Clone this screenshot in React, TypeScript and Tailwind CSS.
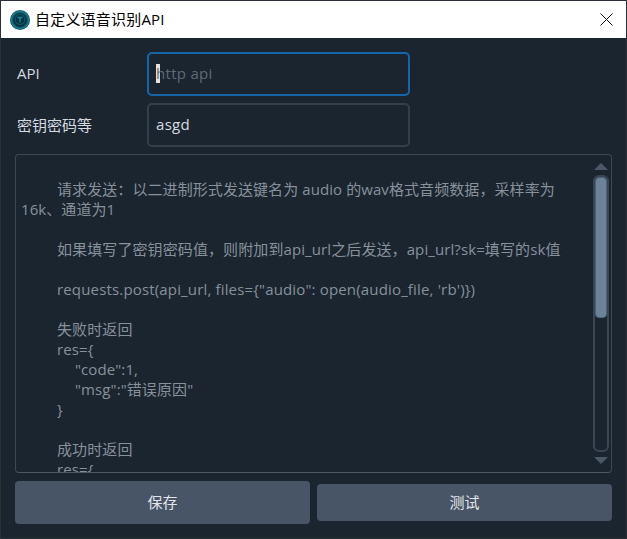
import React from "react";

function Line({ children, indent = "pl-[36px]" }: { children?: React.ReactNode; indent?: string }) {
  return <div className={`h-5 whitespace-pre tracking-[0.1px] ${indent}`}>{children}</div>;
}

export default function App() {
  return (
    <div
      className="w-[627px] h-[539px] overflow-hidden bg-[#1a2530] border border-[#2b3038] flex flex-col"
      style={{ fontFamily: '"Open Sans", "Noto Sans CJK SC", sans-serif' }}
    >
      <div className="h-[37px] shrink-0 bg-white flex items-center pl-[9px] pr-[9px]">
        <svg width="20" height="20" viewBox="0 0 20 20" className="shrink-0">
          <defs>
            <radialGradient id="g" cx="50%" cy="50%" r="50%">
              <stop offset="0%" stopColor="#0c3a48" />
              <stop offset="60%" stopColor="#0a2a36" />
              <stop offset="85%" stopColor="#148090" />
              <stop offset="100%" stopColor="#0d4a58" />
            </radialGradient>
          </defs>
          <circle cx="10" cy="10" r="10" fill="url(#g)" />
          <circle cx="10" cy="9.5" r="5" fill="none" stroke="#0b5c6e" strokeWidth="1.2" />
          <path d="M7.5 7.5h5M10 7.5v5" stroke="#168aa0" strokeWidth="1.3" fill="none" />
        </svg>
        <span className="ml-[5px] text-[15px] tracking-[0.2px] text-black leading-none">自定义语音识别API</span>
        <svg width="13" height="13" viewBox="0 0 13 13" className="ml-auto mr-[4px] mb-[1px]">
          <path d="M0.5 0.5L12.5 12.5M12.5 0.5L0.5 12.5" stroke="#111" strokeWidth="1" fill="none" />
        </svg>
      </div>

      <div className="flex-1 flex flex-col px-[14px]">
        <div className="mt-[14px] flex items-center h-[44px]">
          <label className="w-[132px] pl-[2px] pb-[2px] text-[15px] text-[#d5dae0]">API</label>
          <div className="w-[263px] h-[44px] rounded-[5px] border-2 border-[#1565a8] flex items-center pl-[7px] pb-[2px] text-[15px] tracking-[0.3px] text-[#5f6a75]">
            <span className="w-[4px] h-[19px] bg-[#e8e2da] -mr-[4px]" />
            <span>http api</span>
          </div>
        </div>
        <div className="mt-[7px] flex items-center h-[44px]">
          <label className="w-[132px] pl-[2px] text-[15px] text-[#d5dae0]">密钥密码等</label>
          <div className="w-[263px] h-[44px] rounded-[5px] border-2 border-[#343f4c] flex items-center pl-[7px] pb-[1px] text-[15px] tracking-[0.3px] text-[#d5dae0]">
            asgd
          </div>
        </div>

        <div className="mt-[7px] w-[597px] h-[319px] rounded-[4px] border border-[#3c4856] border-b-[#4a5868] flex overflow-hidden">
          <div className="flex-1 pl-[5px] pt-[4px] text-[15px] leading-5 text-[#87919b] overflow-hidden">
            <Line />
            <div className="w-[537px] indent-[36px] tracking-[0.08px]">请求发送：以二进制形式发送键名为 audio 的wav格式音频数据，采样率为16k、通道为1</div>
            <Line />
            <Line>如果填写了密钥密码值，则附加到api_url之后发送，api_url?sk=填写的sk值</Line>
            <Line />
            <Line indent="pl-[36px] tracking-[0.16px]">{`requests.post(api_url, files={"audio": open(audio_file, 'rb')})`}</Line>
            <Line />
            <Line>失败时返回</Line>
            <Line>{"res={"}</Line>
            <Line indent="pl-[54px]">{'"code":1,'}</Line>
            <Line indent="pl-[54px]">{'"msg":"错误原因"'}</Line>
            <Line>{"}"}</Line>
            <Line />
            <Line>成功时返回</Line>
            <Line>{"res={"}</Line>
          </div>
          <div className="w-[16px] mr-[2px] flex flex-col items-center pt-[8px] shrink-0">
            <div className="w-0 h-0 border-x-[7px] border-x-transparent border-b-[7px] border-b-[#4a5868]" />
            <div className="mt-[5px] w-[16px] h-[277px] shrink-0 rounded-[6px] border-2 border-[#3a4654]">
              <div className="h-[141px] rounded-[4px] border border-[#4d6478] bg-[#6b8297]" />
            </div>
            <div className="mt-[5px] w-0 h-0 border-x-[7px] border-x-transparent border-t-[7px] border-t-[#4a5868]" />
          </div>
        </div>

        <div className="mt-[8px] w-[597px] flex items-center justify-between">
          <button className="w-[295px] h-[43px] rounded-[4px] bg-[#475567] text-[15px] text-[#e2e6ea]">保存</button>
          <button className="w-[295px] h-[37px] rounded-[4px] bg-[#475567] pb-[1px] text-[15px] text-[#e2e6ea]">测试</button>
        </div>
      </div>
    </div>
  );
}
